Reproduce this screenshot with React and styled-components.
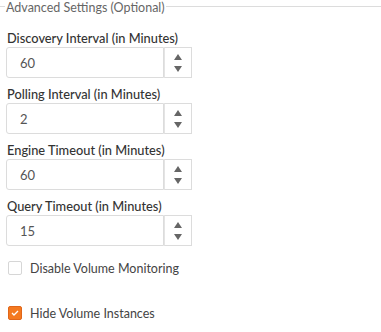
import React from "react";
import styled, { createGlobalStyle } from "styled-components";

const Global = createGlobalStyle`
  html, body { margin: 0; padding: 0; background: #fff; }
  body { font-family: Lato, "Open Sans", sans-serif; }
`;

const Section = styled.section`
  display: flex;
  flex-direction: column;
`;

const Header = styled.div`
  display: flex;
  align-items: flex-start;
  height: 16px;
`;

const Rule = styled.span`
  display: block;
  margin-top: 6px;
  border-top: 1px solid #dcdcdc;
  width: ${(p) => (p.$grow ? "auto" : "5px")};
  flex: ${(p) => (p.$grow ? 1 : "none")};
`;

const Legend = styled.span`
  padding: 0 1px;
  font-size: 12.5px;
  color: #666;
  line-height: 16px;
`;

const Body = styled.div`
  padding-left: 6px;
  display: flex;
  flex-direction: column;
`;

const Group = styled.div`
  margin-top: ${(p) => p.$top}px;
  display: flex;
  flex-direction: column;
`;

const Label = styled.label`
  font-size: 12.8px;
  font-weight: 500;
  color: #333;
  line-height: 16px;
  margin-bottom: 1px;
  padding-left: 1px;
`;

const InputRow = styled.div`
  display: flex;
  height: 31px;
`;

const Field = styled.div`
  width: 158px;
  box-sizing: border-box;
  border: 1px solid #dcdcdc;
  border-radius: 3px 0 0 3px;
  display: flex;
  align-items: center;
  padding-left: 13px;
  font-size: 13px;
  color: #555;
`;

const Spinner = styled.div`
  width: 28px;
  box-sizing: border-box;
  border: 1px solid #dcdcdc;
  border-left-color: #e4e4e4;
  display: flex;
  align-items: center;
  justify-content: center;
`;

const CheckRow = styled.div`
  display: flex;
  align-items: center;
  gap: 8px;
  height: 16px;
  margin-top: ${(p) => p.$top}px;
  padding-left: 2px;
  font-size: 12.5px;
  color: #444;
`;

const Box = styled.span`
  width: 14px;
  height: 14px;
  box-sizing: border-box;
  border-radius: 2px;
  border: 1px solid ${(p) => (p.$on ? "#e0661a" : "#d6d6d6")};
  background: ${(p) => (p.$on ? "#f47920" : "#fff")};
  display: flex;
  align-items: center;
  justify-content: center;
`;

const Arrows = () => (
  <svg width="8" height="18" viewBox="0 0 8 18">
    <path d="M4 0 L8 6 H0 Z" fill="#666" />
    <path d="M4 18 L8 12 H0 Z" fill="#666" />
  </svg>
);

const fields = [
  ["Discovery Interval (in Minutes)", "60", 14],
  ["Polling Interval (in Minutes)", "2", 8],
  ["Engine Timeout (in Minutes)", "60", 8],
  ["Query Timeout (in Minutes)", "15", 8],
];

export default function App() {
  return (
    <>
      <Global />
      <Section>
        <Header>
          <Rule />
          <Legend>Advanced Settings (Optional)</Legend>
          <Rule $grow />
        </Header>
        <Body>
          {fields.map(([l, v, t]) => (
            <Group key={l} $top={t}>
              <Label>{l}</Label>
              <InputRow>
                <Field>{v}</Field>
                <Spinner>
                  <Arrows />
                </Spinner>
              </InputRow>
            </Group>
          ))}
          <CheckRow $top={14}>
            <Box />
            Disable Volume Monitoring
          </CheckRow>
          <CheckRow $top={29}>
            <Box $on>
              <svg width="8" height="6" viewBox="0 0 8 6">
                <path d="M1 3 L3 5 L7 1" stroke="#fff" strokeWidth="1.3" fill="none" />
              </svg>
            </Box>
            Hide Volume Instances
          </CheckRow>
        </Body>
      </Section>
    </>
  );
}
